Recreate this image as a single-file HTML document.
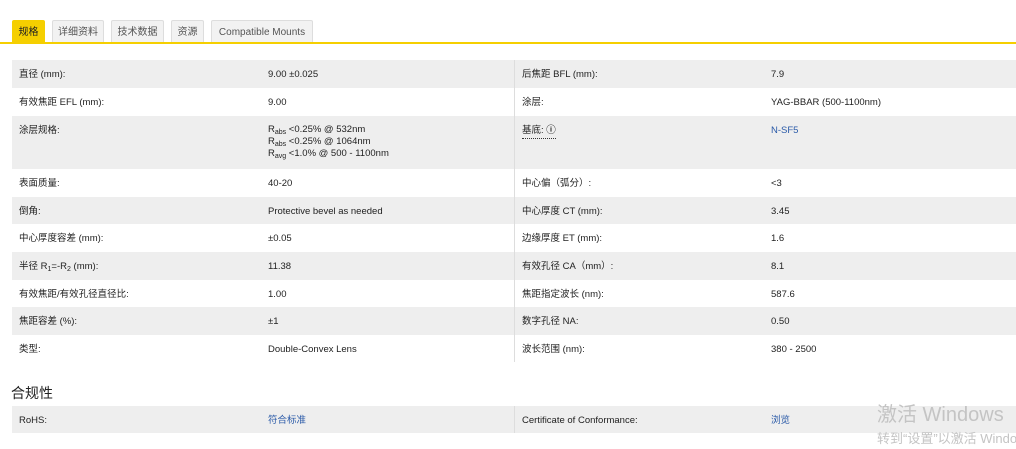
<!DOCTYPE html>
<html><head><meta charset="utf-8"><style>
body{margin:0;width:1016px;height:449px;background:#fff;font-family:"Liberation Sans","Noto Sans CJK SC",sans-serif;font-size:9.5px;color:#222;position:relative;overflow:hidden}
.tab{position:absolute;top:20px;height:23px;box-sizing:border-box;border:1px solid #ddd;border-bottom:none;background:#f2f2f2;color:#555;font-size:10px;line-height:24px;text-align:center;border-radius:2px 2px 0 0}
.tab.on{background:#f5cf00;border-color:#f5cf00;color:#222}
.line{position:absolute;left:0;top:42px;width:1016px;height:2px;background:#f5cf00}
.row{position:absolute;left:12px;width:1004px}
.g{background:#eeeeee}
.c{position:absolute;top:9px;line-height:12px;height:12px;white-space:nowrap}
.vl{position:absolute;left:502px;top:0;bottom:0;width:1px;background:#ddd}
a{color:#2a5aa8;text-decoration:none}
sub{font-size:7px;vertical-align:-2px;line-height:0}
</style></head><body>
<div class="tab on" style="left:12px;width:33px">规格</div>
<div class="tab" style="left:52px;width:52px">详细资料</div>
<div class="tab" style="left:111px;width:53px">技术数据</div>
<div class="tab" style="left:171px;width:33px">资源</div>
<div class="tab" style="left:211px;width:102px">Compatible Mounts</div>
<div class="line"></div>

<div class="row g" style="top:60px;height:28px"><div class="vl"></div><span class="c" style="left:7px">直径 (mm):</span><span class="c" style="left:256px">9.00 ±0.025</span><span class="c" style="left:510px">后焦距 BFL (mm):</span><span class="c" style="left:759px">7.9</span></div>
<div class="row" style="top:88px;height:28px"><div class="vl"></div><span class="c" style="left:7px">有效焦距 EFL (mm):</span><span class="c" style="left:256px">9.00</span><span class="c" style="left:510px">涂层:</span><span class="c" style="left:759px">YAG-BBAR (500-1100nm)</span></div>
<div class="row g" style="top:116px;height:53px"><div class="vl"></div><span class="c" style="left:7px">涂层规格:</span><span class="c" style="left:256px;height:auto;top:8px">R<sub>abs</sub> &lt;0.25% @ 532nm<br>R<sub>abs</sub> &lt;0.25% @ 1064nm<br>R<sub>avg</sub> &lt;1.0% @ 500 - 1100nm</span><span class="c" style="left:510px;border-bottom:1px dotted #333;height:13px">基底: <b>ⓘ</b></span><span class="c" style="left:759px"><a>N-SF5</a></span></div>
<div class="row" style="top:169px;height:28px"><div class="vl"></div><span class="c" style="left:7px">表面质量:</span><span class="c" style="left:256px">40-20</span><span class="c" style="left:510px">中心偏（弧分）:</span><span class="c" style="left:759px">&lt;3</span></div>
<div class="row g" style="top:197px;height:27px"><div class="vl"></div><span class="c" style="left:7px">倒角:</span><span class="c" style="left:256px">Protective bevel as needed</span><span class="c" style="left:510px">中心厚度 CT (mm):</span><span class="c" style="left:759px">3.45</span></div>
<div class="row" style="top:224px;height:28px"><div class="vl"></div><span class="c" style="left:7px">中心厚度容差 (mm):</span><span class="c" style="left:256px">±0.05</span><span class="c" style="left:510px">边缘厚度 ET (mm):</span><span class="c" style="left:759px">1.6</span></div>
<div class="row g" style="top:252px;height:28px"><div class="vl"></div><span class="c" style="left:7px">半径 R<sub>1</sub>=-R<sub>2</sub> (mm):</span><span class="c" style="left:256px">11.38</span><span class="c" style="left:510px">有效孔径 CA（mm）:</span><span class="c" style="left:759px">8.1</span></div>
<div class="row" style="top:280px;height:27px"><div class="vl"></div><span class="c" style="left:7px">有效焦距/有效孔径直径比:</span><span class="c" style="left:256px">1.00</span><span class="c" style="left:510px">焦距指定波长 (nm):</span><span class="c" style="left:759px">587.6</span></div>
<div class="row g" style="top:307px;height:28px"><div class="vl"></div><span class="c" style="left:7px">焦距容差 (%):</span><span class="c" style="left:256px">±1</span><span class="c" style="left:510px">数字孔径 NA:</span><span class="c" style="left:759px">0.50</span></div>
<div class="row" style="top:335px;height:27px"><div class="vl"></div><span class="c" style="left:7px">类型:</span><span class="c" style="left:256px">Double-Convex Lens</span><span class="c" style="left:510px">波长范围 (nm):</span><span class="c" style="left:759px">380 - 2500</span></div>

<div style="position:absolute;left:11px;top:384px;font-size:14px;line-height:18px;color:#222">合规性</div>
<div class="row g" style="top:406px;height:27px"><div class="vl"></div><span class="c" style="left:7px">RoHS:</span><span class="c" style="left:256px"><a>符合标准</a></span><span class="c" style="left:510px">Certificate of Conformance:</span><span class="c" style="left:759px"><a>浏览</a></span></div>
<div style="position:absolute;left:877px;top:403px;font-size:20px;line-height:24px;color:#c4c4c4;white-space:nowrap">激活 Windows</div>
<div style="position:absolute;left:877px;top:430px;font-size:13px;line-height:17px;color:#c4c4c4;white-space:nowrap">转到“设置”以激活 Windows</div>
</body></html>
